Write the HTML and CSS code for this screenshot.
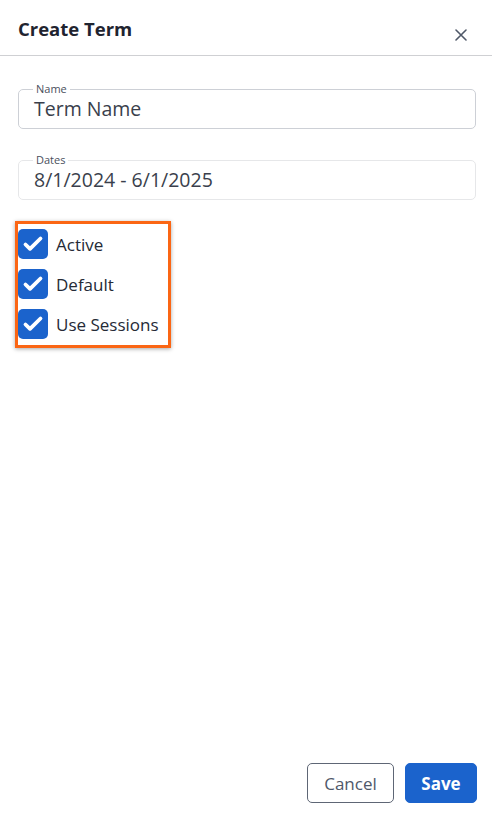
FILE: index.html
```html
<!DOCTYPE html>
<html lang="en">
<head>
<meta charset="utf-8">
<title>Create Term</title>
<link rel="stylesheet" href="styles.css">
</head>
<body>
<div class="dialog">
  <header class="dialog-header">
    <h1 class="dialog-title">Create Term</h1>
    <button class="close-btn" aria-label="Close">
      <svg width="12" height="12" viewBox="0 0 12 12"><path d="M1 1L11 11M11 1L1 11" stroke="#4f5868" stroke-width="1.6" stroke-linecap="round"/></svg>
    </button>
  </header>
  <main class="dialog-body">
    <fieldset class="field">
      <legend class="field-label">Name</legend>
      <div class="field-value">Term Name</div>
    </fieldset>
    <fieldset class="field field-light">
      <legend class="field-label">Dates</legend>
      <div class="field-value">8/1/2024 - 6/1/2025</div>
    </fieldset>
    <div class="check-group">
      <label class="check-row"><span class="check-box"><svg width="30" height="30" viewBox="0 0 30 30"><path d="M7.5 15.5L12 19.8L22.5 9.5" fill="none" stroke="#fff" stroke-width="3.8" stroke-linecap="round" stroke-linejoin="round"/></svg></span><span class="check-text">Active</span></label>
      <label class="check-row"><span class="check-box"><svg width="30" height="30" viewBox="0 0 30 30"><path d="M7.5 15.5L12 19.8L22.5 9.5" fill="none" stroke="#fff" stroke-width="3.8" stroke-linecap="round" stroke-linejoin="round"/></svg></span><span class="check-text">Default</span></label>
      <label class="check-row"><span class="check-box"><svg width="30" height="30" viewBox="0 0 30 30"><path d="M7.5 15.5L12 19.8L22.5 9.5" fill="none" stroke="#fff" stroke-width="3.8" stroke-linecap="round" stroke-linejoin="round"/></svg></span><span class="check-text">Use Sessions</span></label>
    </div>
  </main>
  <footer class="dialog-footer">
    <button class="btn btn-outline">Cancel</button>
    <button class="btn btn-primary">Save</button>
  </footer>
</div>
</body>
</html>
```
FILE: styles.css
```css
* { box-sizing: border-box; }
html, body { margin: 0; padding: 0; background: #fff; }
body { font-family: "Open Sans", "Liberation Sans", sans-serif; color: #222834; }
.dialog { height: 820px; display: flex; flex-direction: column; }
.dialog-header {
  height: 56px;
  border-bottom: 1px solid #cfd0d3;
  display: flex;
  align-items: flex-start;
  justify-content: space-between;
  padding: 0 24px 0 18px;
}
.dialog-title { margin: 17px 0 0; font-size: 18.5px; line-height: 24px; font-weight: 700; color: #1f2430; }
.close-btn { margin-top: 28px; padding: 0; border: 0; background: none; width: 14px; height: 14px; display: flex; align-items: center; justify-content: center; }
.dialog-body { flex: 1; padding: 27px 16px 0 18px; display: flex; flex-direction: column; }
.field {
  margin: 0 0 25px;
  padding: 0 15px;
  border: 1px solid #cdd0d6;
  border-radius: 5px;
  height: 46px;
  min-width: 0;
}
.field-light { border-color: #e6e7e9; margin-bottom: 21px; }
.field-label { font-size: 11px; color: #4a4f5c; padding: 0 3px; margin-left: -1px; line-height: 12px; }
.field-value { font-size: 19.5px; color: #3a3f4c; line-height: 24px; margin-top: 2px; }
.check-group {
  align-self: flex-start;
  margin: 0 0 0 -3px;
  border: 3px solid #fb6614;
  padding: 5px 9px 6px 0;
  box-shadow: 0 1px 4px rgba(0,0,0,0.35);
  display: flex;
  flex-direction: column;
  gap: 10px;
}
.check-row { display: flex; align-items: center; gap: 8px; }
.check-box { width: 30px; height: 30px; border-radius: 5px; background: #1b63cc; display: flex; align-items: center; justify-content: center; }
.check-text { font-size: 17px; color: #252a36; }
.dialog-footer { display: flex; justify-content: flex-end; gap: 11px; padding: 0 15px 17px; }
.btn { height: 40px; border-radius: 5px; font-family: inherit; font-size: 17px; padding: 0 8px; }
.btn-outline { background: #fff; border: 1px solid #5e6675; color: #4f5869; width: 87px; }
.btn-primary { background: #1b63cc; border: 1px solid #1b63cc; color: #fff; font-weight: 700; width: 72px; }
```
